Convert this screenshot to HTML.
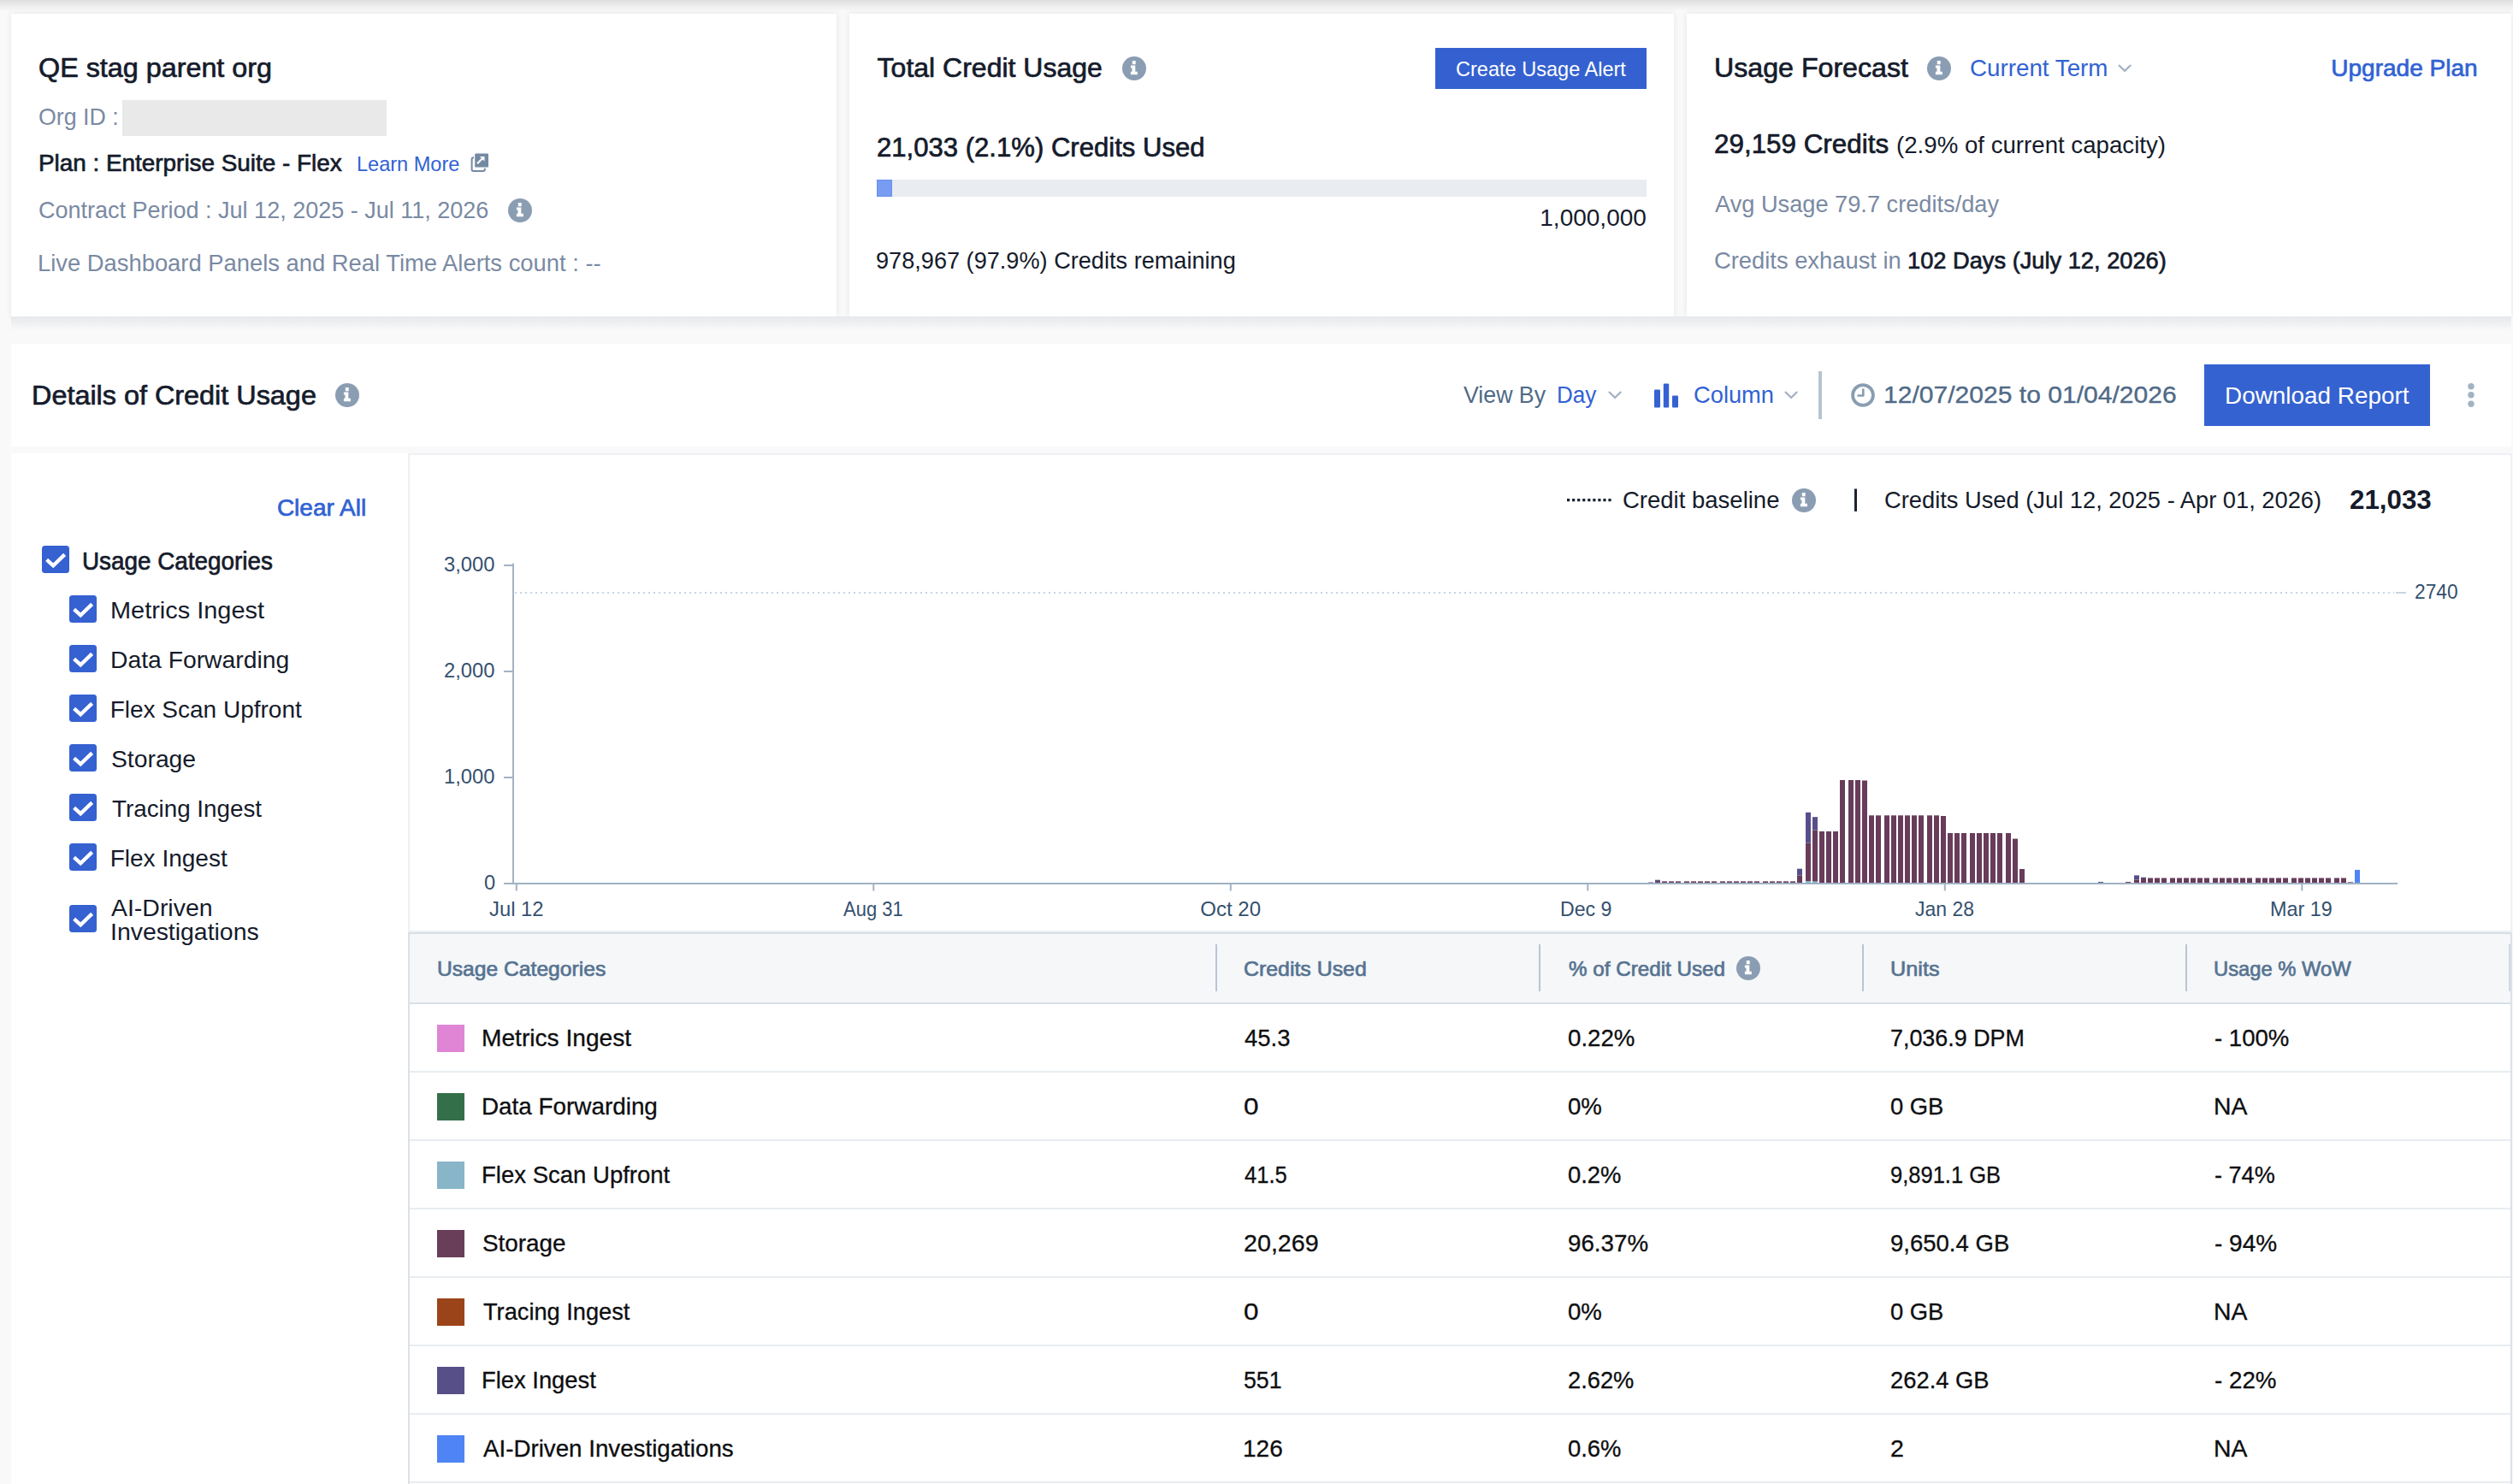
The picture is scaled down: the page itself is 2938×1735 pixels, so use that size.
<!DOCTYPE html>
<html><head><meta charset="utf-8"><title>Credit Usage</title><style>
html,body{margin:0;padding:0}
body{width:2938px;height:1735px;overflow:hidden;position:relative;background:#f9f9f9;font-family:"Liberation Sans",sans-serif}
.box{position:absolute}
.card{position:absolute;background:#fff}
.t{position:absolute;white-space:nowrap;transform-origin:0 0}
.ic{position:absolute;overflow:visible}
</style></head><body>
<div class="box" style="left:0;top:0;width:2938px;height:13px;background:linear-gradient(#dfdfdf,#f9f9f9)"></div>
<div class="card" style="left:13px;top:16px;width:965px;height:354px;box-shadow:0 0 7px rgba(40,60,90,0.1)"></div>
<div class="card" style="left:993px;top:16px;width:964px;height:354px;box-shadow:0 0 7px rgba(40,60,90,0.1)"></div>
<div class="card" style="left:1972px;top:16px;width:964px;height:354px;box-shadow:0 0 7px rgba(40,60,90,0.1)"></div>
<div class="box" style="left:13px;top:370px;width:2923px;height:16px;background:linear-gradient(#e6e8eb,#f9f9f9)"></div>
<div class="box" style="left:143px;top:116.7px;width:309px;height:42.6px;background:#e9e9e9"></div>
<div class="box" style="left:1025px;top:210px;width:900px;height:20px;background:#e9edf1"></div>
<div class="box" style="left:1025px;top:210px;width:18px;height:20px;background:#789cf2;box-shadow:inset 0 0 0 1px #6a90ee"></div>
<div class="box" style="left:1678px;top:56px;width:247px;height:48px;background:#3561d0"></div>
<div class="card" style="left:13px;top:402px;width:2923px;height:120px"></div>
<div class="box" style="left:2126px;top:434px;width:4px;height:56px;background:#b5c4d3"></div>
<div class="box" style="left:2577px;top:426px;width:264px;height:72px;background:#3562d1"></div>
<div class="card" style="left:13px;top:530px;width:2923px;height:1205px"></div>
<div class="box" style="left:477px;top:530px;width:2460px;height:560px;border:2px solid #eef1f4;border-bottom-color:#edf0f3;box-sizing:border-box;background:#fff"></div>
<div class="box" style="left:477px;top:1090px;width:2459px;height:645px;background:#fff;border-left:2px solid #dce1e9;box-sizing:border-box"></div>
<div class="box" style="left:477px;top:1090px;width:2459px;height:2px;background:#d8dee6"></div>
<div class="box" style="left:479px;top:1092px;width:2457px;height:80px;background:#f5f7f9"></div>
<div class="box" style="left:479px;top:1172px;width:2457px;height:2px;background:#d9dfe7"></div>
<div class="box" style="left:1421px;top:1104px;width:2px;height:55px;background:#b9c6d3"></div>
<div class="box" style="left:1799px;top:1104px;width:2px;height:55px;background:#b9c6d3"></div>
<div class="box" style="left:2177px;top:1104px;width:2px;height:55px;background:#b9c6d3"></div>
<div class="box" style="left:2555px;top:1104px;width:2px;height:55px;background:#b9c6d3"></div>
<div class="box" style="left:2933px;top:1104px;width:2px;height:55px;background:#d3d8de"></div>
<div class="box" style="left:479px;top:1252px;width:2457px;height:2px;background:#e8ecf0"></div>
<div class="box" style="left:479px;top:1332px;width:2457px;height:2px;background:#e8ecf0"></div>
<div class="box" style="left:479px;top:1412px;width:2457px;height:2px;background:#e8ecf0"></div>
<div class="box" style="left:479px;top:1492px;width:2457px;height:2px;background:#e8ecf0"></div>
<div class="box" style="left:479px;top:1572px;width:2457px;height:2px;background:#e8ecf0"></div>
<div class="box" style="left:479px;top:1652px;width:2457px;height:2px;background:#e8ecf0"></div>
<div class="box" style="left:479px;top:1732px;width:2457px;height:2px;background:#e8ecf0"></div>
<div class="box" style="left:511px;top:1198px;width:32px;height:32px;background:#e085d6"></div>
<div class="box" style="left:511px;top:1278px;width:32px;height:32px;background:#33704a"></div>
<div class="box" style="left:511px;top:1358px;width:32px;height:32px;background:#88b5c8"></div>
<div class="box" style="left:511px;top:1438px;width:32px;height:32px;background:#683e58"></div>
<div class="box" style="left:511px;top:1518px;width:32px;height:32px;background:#9c4419"></div>
<div class="box" style="left:511px;top:1598px;width:32px;height:32px;background:#574f88"></div>
<div class="box" style="left:511px;top:1678px;width:32px;height:32px;background:#4f84f4"></div>
<div class="box" style="left:2935px;top:1090px;width:2px;height:645px;background:#dce1e9"></div>
<svg class="ic" style="left:0;top:0" width="2938" height="1735" viewBox="0 0 2938 1735"><rect x="1927" y="1031.5" width="6" height="1.5" fill="#574f8a"/><rect x="1935" y="1030.1" width="6" height="2.9" fill="#683c5a"/><rect x="1935" y="1028.7" width="6" height="1.4" fill="#574f8a"/><rect x="1943" y="1030.4" width="6" height="2.6" fill="#683c5a"/><rect x="1951" y="1030.4" width="6" height="2.6" fill="#683c5a"/><rect x="1959" y="1030.4" width="6" height="2.6" fill="#683c5a"/><rect x="1969" y="1030.4" width="6" height="2.6" fill="#683c5a"/><rect x="1977" y="1030.4" width="6" height="2.6" fill="#683c5a"/><rect x="1985" y="1030.4" width="6" height="2.6" fill="#683c5a"/><rect x="1993" y="1030.4" width="6" height="2.6" fill="#683c5a"/><rect x="2001" y="1030.4" width="6" height="2.6" fill="#683c5a"/><rect x="2011" y="1030.4" width="6" height="2.6" fill="#683c5a"/><rect x="2019" y="1030.4" width="6" height="2.6" fill="#683c5a"/><rect x="2027" y="1030.4" width="6" height="2.6" fill="#683c5a"/><rect x="2035" y="1030.4" width="6" height="2.6" fill="#683c5a"/><rect x="2043" y="1030.4" width="6" height="2.6" fill="#683c5a"/><rect x="2051" y="1030.4" width="6" height="2.6" fill="#683c5a"/><rect x="2061" y="1030.4" width="6" height="2.6" fill="#683c5a"/><rect x="2069" y="1030.4" width="6" height="2.6" fill="#683c5a"/><rect x="2077" y="1030.4" width="6" height="2.6" fill="#683c5a"/><rect x="2085" y="1030.4" width="6" height="2.6" fill="#683c5a"/><rect x="2093" y="1030.4" width="6" height="2.6" fill="#683c5a"/><rect x="2101" y="1023.5" width="6" height="9.5" fill="#683c5a"/><rect x="2101" y="1015.7" width="6" height="7.8" fill="#574f8a"/><rect x="2111" y="1030.0" width="6" height="3.0" fill="#86b4c8"/><rect x="2111" y="985.5" width="6" height="44.5" fill="#683c5a"/><rect x="2111" y="949.8" width="6" height="35.7" fill="#574f8a"/><rect x="2119" y="1030.5" width="6" height="2.5" fill="#86b4c8"/><rect x="2119" y="970.5" width="6" height="60.0" fill="#683c5a"/><rect x="2119" y="955.2" width="6" height="15.3" fill="#574f8a"/><rect x="2127" y="972.0" width="6" height="61.0" fill="#683c5a"/><rect x="2135" y="972.0" width="6" height="61.0" fill="#683c5a"/><rect x="2143" y="972.0" width="6" height="61.0" fill="#683c5a"/><rect x="2151" y="912.0" width="6" height="121.0" fill="#683c5a"/><rect x="2161" y="912.0" width="6" height="121.0" fill="#683c5a"/><rect x="2169" y="912.0" width="6" height="121.0" fill="#683c5a"/><rect x="2177" y="912.5" width="6" height="120.5" fill="#683c5a"/><rect x="2185" y="953.3" width="6" height="79.7" fill="#683c5a"/><rect x="2193" y="953.3" width="6" height="79.7" fill="#683c5a"/><rect x="2203" y="953.3" width="6" height="79.7" fill="#683c5a"/><rect x="2211" y="953.3" width="6" height="79.7" fill="#683c5a"/><rect x="2219" y="953.3" width="6" height="79.7" fill="#683c5a"/><rect x="2227" y="953.3" width="6" height="79.7" fill="#683c5a"/><rect x="2235" y="953.3" width="6" height="79.7" fill="#683c5a"/><rect x="2243" y="953.3" width="6" height="79.7" fill="#683c5a"/><rect x="2253" y="953.3" width="6" height="79.7" fill="#683c5a"/><rect x="2261" y="953.3" width="6" height="79.7" fill="#683c5a"/><rect x="2269" y="954.0" width="6" height="79.0" fill="#683c5a"/><rect x="2277" y="974.0" width="6" height="59.0" fill="#683c5a"/><rect x="2285" y="974.0" width="6" height="59.0" fill="#683c5a"/><rect x="2293" y="974.0" width="6" height="59.0" fill="#683c5a"/><rect x="2303" y="974.0" width="6" height="59.0" fill="#683c5a"/><rect x="2311" y="974.0" width="6" height="59.0" fill="#683c5a"/><rect x="2319" y="974.0" width="6" height="59.0" fill="#683c5a"/><rect x="2327" y="974.0" width="6" height="59.0" fill="#683c5a"/><rect x="2335" y="974.0" width="6" height="59.0" fill="#683c5a"/><rect x="2345" y="974.0" width="6" height="59.0" fill="#683c5a"/><rect x="2353" y="980.6" width="6" height="52.4" fill="#683c5a"/><rect x="2361" y="1016.0" width="6" height="17.0" fill="#683c5a"/><rect x="2453" y="1031.0" width="6" height="2.0" fill="#574f8a"/><rect x="2485" y="1031.0" width="6" height="2.0" fill="#683c5a"/><rect x="2495" y="1028.4" width="6" height="4.6" fill="#683c5a"/><rect x="2495" y="1023.4" width="6" height="5.0" fill="#574f8a"/><rect x="2503" y="1027.0" width="6" height="6.0" fill="#683c5a"/><rect x="2503" y="1025.7" width="6" height="1.3" fill="#574f8a"/><rect x="2511" y="1026.5" width="6" height="6.5" fill="#683c5a"/><rect x="2519" y="1026.5" width="6" height="6.5" fill="#683c5a"/><rect x="2527" y="1026.5" width="6" height="6.5" fill="#683c5a"/><rect x="2537" y="1026.5" width="6" height="6.5" fill="#683c5a"/><rect x="2545" y="1026.5" width="6" height="6.5" fill="#683c5a"/><rect x="2553" y="1026.5" width="6" height="6.5" fill="#683c5a"/><rect x="2561" y="1026.5" width="6" height="6.5" fill="#683c5a"/><rect x="2569" y="1026.5" width="6" height="6.5" fill="#683c5a"/><rect x="2577" y="1026.5" width="6" height="6.5" fill="#683c5a"/><rect x="2587" y="1026.5" width="6" height="6.5" fill="#683c5a"/><rect x="2595" y="1026.5" width="6" height="6.5" fill="#683c5a"/><rect x="2603" y="1026.5" width="6" height="6.5" fill="#683c5a"/><rect x="2611" y="1026.5" width="6" height="6.5" fill="#683c5a"/><rect x="2619" y="1026.5" width="6" height="6.5" fill="#683c5a"/><rect x="2627" y="1026.5" width="6" height="6.5" fill="#683c5a"/><rect x="2637" y="1026.5" width="6" height="6.5" fill="#683c5a"/><rect x="2645" y="1026.5" width="6" height="6.5" fill="#683c5a"/><rect x="2653" y="1026.5" width="6" height="6.5" fill="#683c5a"/><rect x="2661" y="1026.5" width="6" height="6.5" fill="#683c5a"/><rect x="2669" y="1026.5" width="6" height="6.5" fill="#683c5a"/><rect x="2679" y="1026.5" width="6" height="6.5" fill="#683c5a"/><rect x="2687" y="1026.5" width="6" height="6.5" fill="#683c5a"/><rect x="2695" y="1026.5" width="6" height="6.5" fill="#683c5a"/><rect x="2703" y="1026.5" width="6" height="6.5" fill="#683c5a"/><rect x="2711" y="1026.5" width="6" height="6.5" fill="#683c5a"/><rect x="2719" y="1026.5" width="6" height="6.5" fill="#683c5a"/><rect x="2729" y="1026.5" width="6" height="6.5" fill="#683c5a"/><rect x="2737" y="1026.5" width="6" height="6.5" fill="#683c5a"/><rect x="2745" y="1031.3" width="6" height="1.7" fill="#683c5a"/><rect x="2753" y="1017.0" width="6" height="16.0" fill="#4f84f4"/><line x1="602" y1="693" x2="2799" y2="693" stroke="#c6d5e3" stroke-width="2" stroke-dasharray="2 4"/><line x1="2801" y1="693" x2="2813" y2="693" stroke="#c6d5e3" stroke-width="2"/><rect x="599" y="658.6" width="2" height="375.4" fill="#a2b3c4"/><rect x="600" y="1032" width="2203" height="2" fill="#9fb2c4"/><rect x="589" y="660" width="11" height="2" fill="#a2b3c4"/><rect x="589" y="784" width="11" height="2" fill="#a2b3c4"/><rect x="589" y="908" width="11" height="2" fill="#a2b3c4"/><rect x="589" y="1032" width="11" height="2" fill="#a2b3c4"/><rect x="602.8" y="1034" width="2" height="7.5" fill="#a2b3c4"/><rect x="1020.3" y="1034" width="2" height="7.5" fill="#a2b3c4"/><rect x="1437.8" y="1034" width="2" height="7.5" fill="#a2b3c4"/><rect x="1855.3" y="1034" width="2" height="7.5" fill="#a2b3c4"/><rect x="2272.8" y="1034" width="2" height="7.5" fill="#a2b3c4"/><rect x="2690.3" y="1034" width="2" height="7.5" fill="#a2b3c4"/><line x1="1832" y1="584.7" x2="1884" y2="584.7" stroke="#1b2333" stroke-width="3.2" stroke-dasharray="3.2 2.85"/><rect x="2168" y="571.5" width="3" height="26.4" fill="#1b2333"/></svg>
<svg class="ic" style="left:594.1px;top:231.9px" width="28" height="28" viewBox="0 0 28 28"><circle cx="14" cy="14" r="14" fill="#8b9db3"/><rect x="11.8" y="5" width="3.9" height="4.2" rx="0.5" fill="#fff"/><path d="M9.9 10.4H15.3V17.8H17.9V21.2H9.9V17.8H11.5V13.6H9.9Z" fill="#fff"/></svg>
<svg class="ic" style="left:1311.9px;top:65.9px" width="28" height="28" viewBox="0 0 28 28"><circle cx="14" cy="14" r="14" fill="#8b9db3"/><rect x="11.8" y="5" width="3.9" height="4.2" rx="0.5" fill="#fff"/><path d="M9.9 10.4H15.3V17.8H17.9V21.2H9.9V17.8H11.5V13.6H9.9Z" fill="#fff"/></svg>
<svg class="ic" style="left:2253.0px;top:66.0px" width="28" height="28" viewBox="0 0 28 28"><circle cx="14" cy="14" r="14" fill="#8b9db3"/><rect x="11.8" y="5" width="3.9" height="4.2" rx="0.5" fill="#fff"/><path d="M9.9 10.4H15.3V17.8H17.9V21.2H9.9V17.8H11.5V13.6H9.9Z" fill="#fff"/></svg>
<svg class="ic" style="left:392.0px;top:447.9px" width="28" height="28" viewBox="0 0 28 28"><circle cx="14" cy="14" r="14" fill="#8b9db3"/><rect x="11.8" y="5" width="3.9" height="4.2" rx="0.5" fill="#fff"/><path d="M9.9 10.4H15.3V17.8H17.9V21.2H9.9V17.8H11.5V13.6H9.9Z" fill="#fff"/></svg>
<svg class="ic" style="left:2095.0px;top:571.0px" width="28" height="28" viewBox="0 0 28 28"><circle cx="14" cy="14" r="14" fill="#8b9db3"/><rect x="11.8" y="5" width="3.9" height="4.2" rx="0.5" fill="#fff"/><path d="M9.9 10.4H15.3V17.8H17.9V21.2H9.9V17.8H11.5V13.6H9.9Z" fill="#fff"/></svg>
<svg class="ic" style="left:2029.9px;top:1117.9px" width="28" height="28" viewBox="0 0 28 28"><circle cx="14" cy="14" r="14" fill="#8b9db3"/><rect x="11.8" y="5" width="3.9" height="4.2" rx="0.5" fill="#fff"/><path d="M9.9 10.4H15.3V17.8H17.9V21.2H9.9V17.8H11.5V13.6H9.9Z" fill="#fff"/></svg>
<svg class="ic" style="left:2475.8px;top:75.1px" width="17" height="11" viewBox="0 0 17 11"><path d="M1.6 1.6L8.1 7.9L14.6 1.6" fill="none" stroke="#a6b4c4" stroke-width="2.2" stroke-linecap="round"/></svg>
<svg class="ic" style="left:1879.5px;top:456.8px" width="17" height="11" viewBox="0 0 17 11"><path d="M1.6 1.6L8.1 7.9L14.6 1.6" fill="none" stroke="#a6b4c4" stroke-width="2.2" stroke-linecap="round"/></svg>
<svg class="ic" style="left:2085.7px;top:456.8px" width="17" height="11" viewBox="0 0 17 11"><path d="M1.6 1.6L8.1 7.9L14.6 1.6" fill="none" stroke="#a6b4c4" stroke-width="2.2" stroke-linecap="round"/></svg>
<svg class="ic" style="left:550px;top:178.5px" width="22" height="22" viewBox="0 0 22 22"><rect x="1.6" y="5.3" width="15.2" height="15.6" rx="2" fill="none" stroke="#7489a2" stroke-width="2"/><rect x="4.6" y="-0.2" width="17" height="17.4" rx="1.8" fill="#7489a2" stroke="#fff" stroke-width="1.2"/><path d="M8 12.3L14.6 5.7" stroke="#fff" stroke-width="2.2"/><path d="M10.9 3.9H16.5V9.5Z" fill="#fff"/></svg>
<svg class="ic" style="left:1934px;top:447.5px" width="29" height="29" viewBox="0 0 29 29"><rect x="0" y="7.5" width="7" height="21" rx="1" fill="#3561d1"/><rect x="10.8" y="0.4" width="6.4" height="28.1" rx="1" fill="#3561d1"/><rect x="21" y="14.4" width="7" height="14.1" rx="1" fill="#3561d1"/></svg>
<svg class="ic" style="left:2164px;top:448px" width="28" height="28" viewBox="0 0 28 28"><circle cx="14" cy="14" r="11.95" fill="none" stroke="#8a9db1" stroke-width="3.8"/><path d="M14.3 7.6V14.5H8.6" fill="none" stroke="#8a9db1" stroke-width="2.7" stroke-linecap="round" stroke-linejoin="round"/></svg>
<svg class="ic" style="left:2884px;top:447px" width="10" height="30" viewBox="0 0 10 30"><circle cx="5" cy="4.7" r="3.7" fill="#a3b2c4"/><circle cx="5" cy="14.8" r="3.7" fill="#a3b2c4"/><circle cx="5" cy="25.3" r="3.7" fill="#a3b2c4"/></svg>
<svg class="ic" style="left:49px;top:638px" width="32" height="32" viewBox="0 0 32 32"><rect width="32" height="32" rx="3.5" fill="#3561d1"/><path d="M5.6 16.4L13.2 23.2L26.6 10.4" fill="none" stroke="#fff" stroke-width="4.3"/></svg>
<svg class="ic" style="left:81px;top:696.3px" width="32" height="32" viewBox="0 0 32 32"><rect width="32" height="32" rx="3.5" fill="#3561d1"/><path d="M5.6 16.4L13.2 23.2L26.6 10.4" fill="none" stroke="#fff" stroke-width="4.3"/></svg>
<svg class="ic" style="left:81px;top:754.3px" width="32" height="32" viewBox="0 0 32 32"><rect width="32" height="32" rx="3.5" fill="#3561d1"/><path d="M5.6 16.4L13.2 23.2L26.6 10.4" fill="none" stroke="#fff" stroke-width="4.3"/></svg>
<svg class="ic" style="left:81px;top:812.3px" width="32" height="32" viewBox="0 0 32 32"><rect width="32" height="32" rx="3.5" fill="#3561d1"/><path d="M5.6 16.4L13.2 23.2L26.6 10.4" fill="none" stroke="#fff" stroke-width="4.3"/></svg>
<svg class="ic" style="left:81px;top:870.3px" width="32" height="32" viewBox="0 0 32 32"><rect width="32" height="32" rx="3.5" fill="#3561d1"/><path d="M5.6 16.4L13.2 23.2L26.6 10.4" fill="none" stroke="#fff" stroke-width="4.3"/></svg>
<svg class="ic" style="left:81px;top:928.3px" width="32" height="32" viewBox="0 0 32 32"><rect width="32" height="32" rx="3.5" fill="#3561d1"/><path d="M5.6 16.4L13.2 23.2L26.6 10.4" fill="none" stroke="#fff" stroke-width="4.3"/></svg>
<svg class="ic" style="left:81px;top:986.3px" width="32" height="32" viewBox="0 0 32 32"><rect width="32" height="32" rx="3.5" fill="#3561d1"/><path d="M5.6 16.4L13.2 23.2L26.6 10.4" fill="none" stroke="#fff" stroke-width="4.3"/></svg>
<svg class="ic" style="left:81px;top:1058px" width="32" height="32" viewBox="0 0 32 32"><rect width="32" height="32" rx="3.5" fill="#3561d1"/><path d="M5.6 16.4L13.2 23.2L26.6 10.4" fill="none" stroke="#fff" stroke-width="4.3"/></svg>
<span class="t" style="left:44.79px;top:63.00px;font-size:32px;line-height:32px;color:#151b2b;-webkit-text-stroke:0.7px #151b2b;transform:scaleX(1.0097);">QE stag parent org</span>
<span class="t" style="left:44.95px;top:123.00px;font-size:28px;line-height:28px;color:#7a8aa3;transform:scaleX(0.9547);">Org ID :</span>
<span class="t" style="left:44.71px;top:177.00px;font-size:28px;line-height:28px;color:#151b2b;-webkit-text-stroke:0.7px #151b2b;transform:scaleX(0.9952);">Plan : Enterprise Suite - Flex</span>
<span class="t" style="left:416.84px;top:180.20px;font-size:24px;line-height:24px;color:#3162d4;transform:scaleX(0.9808);">Learn More</span>
<span class="t" style="left:44.54px;top:232.00px;font-size:28px;line-height:28px;color:#7a8aa3;transform:scaleX(0.9643);">Contract Period : Jul 12, 2025 - Jul 11, 2026</span>
<span class="t" style="left:43.55px;top:294.20px;font-size:28px;line-height:28px;color:#7a8aa3;transform:scaleX(0.9773);">Live Dashboard Panels and Real Time Alerts count : --</span>
<span class="t" style="left:1025.60px;top:63.00px;font-size:32px;line-height:32px;color:#151b2b;-webkit-text-stroke:0.7px #151b2b;">Total Credit Usage</span>
<span class="t" style="left:1701.92px;top:69.00px;font-size:24px;line-height:24px;color:#ffffff;transform:scaleX(0.9807);">Create Usage Alert</span>
<span class="t" style="left:1025.03px;top:156.20px;font-size:32px;line-height:32px;color:#151b2b;-webkit-text-stroke:0.7px #151b2b;transform:scaleX(0.9715);">21,033 (2.1%) Credits Used</span>
<span class="t" style="left:1800.30px;top:241.00px;font-size:28px;line-height:28px;color:#151b2b;">1,000,000</span>
<span class="t" style="left:1024.03px;top:290.60px;font-size:28px;line-height:28px;color:#151b2b;transform:scaleX(0.9690);">978,967 (97.9%) Credits remaining</span>
<span class="t" style="left:2003.59px;top:63.10px;font-size:32px;line-height:32px;color:#151b2b;-webkit-text-stroke:0.7px #151b2b;transform:scaleX(1.0049);">Usage Forecast</span>
<span class="t" style="left:2303.01px;top:65.90px;font-size:28px;line-height:28px;color:#3162d4;transform:scaleX(0.9912);">Current Term</span>
<span class="t" style="left:2725.30px;top:65.80px;font-size:28px;line-height:28px;color:#3162d4;-webkit-text-stroke:0.7px #3162d4;">Upgrade Plan</span>
<span class="t" style="left:2004.02px;top:152.30px;font-size:32px;line-height:32px;color:#151b2b;-webkit-text-stroke:0.7px #151b2b;transform:scaleX(0.9807);">29,159 Credits</span>
<span class="t" style="left:2217.41px;top:156.20px;font-size:28px;line-height:28px;color:#151b2b;transform:scaleX(0.9874);">(2.9% of current capacity)</span>
<span class="t" style="left:2004.80px;top:225.20px;font-size:28px;line-height:28px;color:#7a8aa3;transform:scaleX(0.9713);">Avg Usage 79.7 credits/day</span>
<span class="t" style="left:2004.12px;top:291.30px;font-size:28px;line-height:28px;color:#7a8aa3;transform:scaleX(0.9761);">Credits exhaust in</span>
<span class="t" style="left:2229.83px;top:291.00px;font-size:28px;line-height:28px;color:#151b2b;-webkit-text-stroke:0.7px #151b2b;transform:scaleX(0.9728);">102 Days (July 12, 2026)</span>
<span class="t" style="left:36.68px;top:446.20px;font-size:32px;line-height:32px;color:#151b2b;-webkit-text-stroke:0.7px #151b2b;transform:scaleX(1.0117);">Details of Credit Usage</span>
<span class="t" style="left:1710.60px;top:448.00px;font-size:28px;line-height:28px;color:#4f6a87;transform:scaleX(0.9545);">View By</span>
<span class="t" style="left:1820.14px;top:448.00px;font-size:28px;line-height:28px;color:#3162d4;transform:scaleX(0.9313);">Day</span>
<span class="t" style="left:1979.63px;top:448.20px;font-size:28px;line-height:28px;color:#3162d4;transform:scaleX(0.9745);">Column</span>
<span class="t" style="left:2202.15px;top:448.00px;font-size:28px;line-height:28px;color:#4f6a87;-webkit-text-stroke:0.35px #4f6a87;transform:scaleX(1.0737);">12/07/2025 to 01/04/2026</span>
<span class="t" style="left:2600.81px;top:449.30px;font-size:28px;line-height:28px;color:#ffffff;transform:scaleX(0.9958);">Download Report</span>
<span class="t" style="left:323.90px;top:580.10px;font-size:28px;line-height:28px;color:#3162d4;-webkit-text-stroke:0.7px #3162d4;">Clear All</span>
<span class="t" style="left:96.48px;top:641.50px;font-size:29px;line-height:29px;color:#151b2b;-webkit-text-stroke:0.7px #151b2b;transform:scaleX(0.9604);">Usage Categories</span>
<span class="t" style="left:128.63px;top:700.00px;font-size:28px;line-height:28px;color:#151b2b;transform:scaleX(1.0326);">Metrics Ingest</span>
<span class="t" style="left:128.68px;top:758.00px;font-size:28px;line-height:28px;color:#151b2b;transform:scaleX(1.0108);">Data Forwarding</span>
<span class="t" style="left:128.70px;top:816.00px;font-size:28px;line-height:28px;color:#151b2b;">Flex Scan Upfront</span>
<span class="t" style="left:129.69px;top:874.00px;font-size:28px;line-height:28px;color:#151b2b;transform:scaleX(1.0104);">Storage</span>
<span class="t" style="left:130.70px;top:932.00px;font-size:28px;line-height:28px;color:#151b2b;transform:scaleX(0.9926);">Tracing Ingest</span>
<span class="t" style="left:128.71px;top:990.00px;font-size:28px;line-height:28px;color:#151b2b;">Flex Ingest</span>
<span class="t" style="left:130.20px;top:1047.90px;font-size:28px;line-height:28px;color:#151b2b;transform:scaleX(1.0157);">AI-Driven</span>
<span class="t" style="left:128.97px;top:1075.70px;font-size:28px;line-height:28px;color:#151b2b;transform:scaleX(1.0142);">Investigations</span>
<span class="t" style="left:1897.02px;top:571.20px;font-size:28px;line-height:28px;color:#151b2b;transform:scaleX(0.9822);">Credit baseline</span>
<span class="t" style="left:2203.33px;top:571.20px;font-size:28px;line-height:28px;color:#151b2b;transform:scaleX(0.9745);">Credits Used (Jul 12, 2025 - Apr 01, 2026)</span>
<span class="t" style="left:2746.82px;top:568.00px;font-size:32px;line-height:32px;color:#151b2b;font-weight:bold;transform:scaleX(0.9781);">21,033</span>
<span class="t" style="left:519.31px;top:647.80px;font-size:24px;line-height:24px;color:#34506e;transform:scaleX(0.9881);">3,000</span>
<span class="t" style="left:519.31px;top:771.80px;font-size:24px;line-height:24px;color:#34506e;transform:scaleX(0.9881);">2,000</span>
<span class="t" style="left:519.22px;top:895.80px;font-size:24px;line-height:24px;color:#34506e;transform:scaleX(0.9897);">1,000</span>
<span class="t" style="left:565.82px;top:1019.80px;font-size:24px;line-height:24px;color:#34506e;transform:scaleX(0.9833);">0</span>
<span class="t" style="left:2822.75px;top:679.80px;font-size:24px;line-height:24px;color:#34506e;transform:scaleX(0.9462);">2740</span>
<span class="t" style="left:571.50px;top:1051.00px;font-size:24px;line-height:24px;color:#34506e;transform:scaleX(0.9921);">Jul 12</span>
<span class="t" style="left:985.80px;top:1051.00px;font-size:24px;line-height:24px;color:#34506e;transform:scaleX(0.9160);">Aug 31</span>
<span class="t" style="left:1403.30px;top:1051.00px;font-size:24px;line-height:24px;color:#34506e;">Oct 20</span>
<span class="t" style="left:1824.17px;top:1050.90px;font-size:24px;line-height:24px;color:#34506e;transform:scaleX(0.9633);">Dec 9</span>
<span class="t" style="left:2239.30px;top:1050.70px;font-size:24px;line-height:24px;color:#34506e;transform:scaleX(0.9563);">Jan 28</span>
<span class="t" style="left:2653.65px;top:1050.70px;font-size:24px;line-height:24px;color:#34506e;transform:scaleX(0.9736);">Mar 19</span>
<span class="t" style="left:510.77px;top:1121.20px;font-size:24px;line-height:24px;color:#577391;-webkit-text-stroke:0.7px #577391;transform:scaleX(1.0267);">Usage Categories</span>
<span class="t" style="left:1453.96px;top:1121.20px;font-size:24px;line-height:24px;color:#577391;-webkit-text-stroke:0.7px #577391;transform:scaleX(1.0365);">Credits Used</span>
<span class="t" style="left:1834.40px;top:1121.20px;font-size:24px;line-height:24px;color:#577391;-webkit-text-stroke:0.7px #577391;transform:scaleX(1.0088);">% of Credit Used</span>
<span class="t" style="left:2209.95px;top:1121.20px;font-size:24px;line-height:24px;color:#577391;-webkit-text-stroke:0.7px #577391;transform:scaleX(1.0519);">Units</span>
<span class="t" style="left:2588.01px;top:1121.20px;font-size:24px;line-height:24px;color:#577391;-webkit-text-stroke:0.7px #577391;transform:scaleX(0.9907);">Usage % WoW</span>
<span class="t" style="left:562.59px;top:1200.00px;font-size:28px;line-height:28px;color:#0d0e10;-webkit-text-stroke:0.3px #0d0e10;transform:scaleX(1.0046);">Metrics Ingest</span>
<span class="t" style="left:1455.00px;top:1200.00px;font-size:28px;line-height:28px;color:#0d0e10;-webkit-text-stroke:0.3px #0d0e10;transform:scaleX(0.9796);">45.3</span>
<span class="t" style="left:1832.61px;top:1200.00px;font-size:28px;line-height:28px;color:#0d0e10;-webkit-text-stroke:0.3px #0d0e10;transform:scaleX(0.9885);">0.22%</span>
<span class="t" style="left:2210.44px;top:1200.00px;font-size:28px;line-height:28px;color:#0d0e10;-webkit-text-stroke:0.3px #0d0e10;transform:scaleX(0.9602);">7,036.9 DPM</span>
<span class="t" style="left:2589.01px;top:1200.00px;font-size:28px;line-height:28px;color:#0d0e10;-webkit-text-stroke:0.3px #0d0e10;transform:scaleX(0.9851);">- 100%</span>
<span class="t" style="left:562.61px;top:1280.00px;font-size:28px;line-height:28px;color:#0d0e10;-webkit-text-stroke:0.3px #0d0e10;transform:scaleX(0.9946);">Data Forwarding</span>
<span class="t" style="left:1453.88px;top:1280.00px;font-size:28px;line-height:28px;color:#0d0e10;-webkit-text-stroke:0.3px #0d0e10;transform:scaleX(1.1214);">0</span>
<span class="t" style="left:1832.62px;top:1280.00px;font-size:28px;line-height:28px;color:#0d0e10;-webkit-text-stroke:0.3px #0d0e10;transform:scaleX(0.9846);">0%</span>
<span class="t" style="left:2210.42px;top:1280.00px;font-size:28px;line-height:28px;color:#0d0e10;-webkit-text-stroke:0.3px #0d0e10;transform:scaleX(0.9774);">0 GB</span>
<span class="t" style="left:2587.97px;top:1280.00px;font-size:28px;line-height:28px;color:#0d0e10;-webkit-text-stroke:0.3px #0d0e10;transform:scaleX(1.0135);">NA</span>
<span class="t" style="left:562.63px;top:1360.00px;font-size:28px;line-height:28px;color:#0d0e10;-webkit-text-stroke:0.3px #0d0e10;transform:scaleX(0.9829);">Flex Scan Upfront</span>
<span class="t" style="left:1455.00px;top:1360.00px;font-size:28px;line-height:28px;color:#0d0e10;-webkit-text-stroke:0.3px #0d0e10;transform:scaleX(0.9130);">41.5</span>
<span class="t" style="left:1832.62px;top:1360.00px;font-size:28px;line-height:28px;color:#0d0e10;-webkit-text-stroke:0.3px #0d0e10;transform:scaleX(0.9790);">0.2%</span>
<span class="t" style="left:2210.49px;top:1360.00px;font-size:28px;line-height:28px;color:#0d0e10;-webkit-text-stroke:0.3px #0d0e10;transform:scaleX(0.9114);">9,891.1 GB</span>
<span class="t" style="left:2589.03px;top:1360.00px;font-size:28px;line-height:28px;color:#0d0e10;-webkit-text-stroke:0.3px #0d0e10;transform:scaleX(0.9667);">- 74%</span>
<span class="t" style="left:563.61px;top:1440.00px;font-size:28px;line-height:28px;color:#0d0e10;-webkit-text-stroke:0.3px #0d0e10;transform:scaleX(0.9948);">Storage</span>
<span class="t" style="left:1453.98px;top:1440.00px;font-size:28px;line-height:28px;color:#0d0e10;-webkit-text-stroke:0.3px #0d0e10;transform:scaleX(1.0238);">20,269</span>
<span class="t" style="left:1832.61px;top:1440.00px;font-size:28px;line-height:28px;color:#0d0e10;-webkit-text-stroke:0.3px #0d0e10;transform:scaleX(0.9903);">96.37%</span>
<span class="t" style="left:2210.42px;top:1440.00px;font-size:28px;line-height:28px;color:#0d0e10;-webkit-text-stroke:0.3px #0d0e10;transform:scaleX(0.9829);">9,650.4 GB</span>
<span class="t" style="left:2589.00px;top:1440.00px;font-size:28px;line-height:28px;color:#0d0e10;-webkit-text-stroke:0.3px #0d0e10;">- 94%</span>
<span class="t" style="left:564.60px;top:1520.00px;font-size:28px;line-height:28px;color:#0d0e10;-webkit-text-stroke:0.3px #0d0e10;transform:scaleX(0.9712);">Tracing Ingest</span>
<span class="t" style="left:1453.88px;top:1520.00px;font-size:28px;line-height:28px;color:#0d0e10;-webkit-text-stroke:0.3px #0d0e10;transform:scaleX(1.1214);">0</span>
<span class="t" style="left:1832.62px;top:1520.00px;font-size:28px;line-height:28px;color:#0d0e10;-webkit-text-stroke:0.3px #0d0e10;transform:scaleX(0.9846);">0%</span>
<span class="t" style="left:2210.42px;top:1520.00px;font-size:28px;line-height:28px;color:#0d0e10;-webkit-text-stroke:0.3px #0d0e10;transform:scaleX(0.9774);">0 GB</span>
<span class="t" style="left:2587.97px;top:1520.00px;font-size:28px;line-height:28px;color:#0d0e10;-webkit-text-stroke:0.3px #0d0e10;transform:scaleX(1.0135);">NA</span>
<span class="t" style="left:562.65px;top:1600.00px;font-size:28px;line-height:28px;color:#0d0e10;-webkit-text-stroke:0.3px #0d0e10;transform:scaleX(0.9770);">Flex Ingest</span>
<span class="t" style="left:1454.05px;top:1600.00px;font-size:28px;line-height:28px;color:#0d0e10;-webkit-text-stroke:0.3px #0d0e10;transform:scaleX(0.9533);">551</span>
<span class="t" style="left:1832.63px;top:1600.00px;font-size:28px;line-height:28px;color:#0d0e10;-webkit-text-stroke:0.3px #0d0e10;transform:scaleX(0.9744);">2.62%</span>
<span class="t" style="left:2210.42px;top:1600.00px;font-size:28px;line-height:28px;color:#0d0e10;-webkit-text-stroke:0.3px #0d0e10;transform:scaleX(0.9769);">262.4 GB</span>
<span class="t" style="left:2589.01px;top:1600.00px;font-size:28px;line-height:28px;color:#0d0e10;-webkit-text-stroke:0.3px #0d0e10;transform:scaleX(0.9917);">- 22%</span>
<span class="t" style="left:564.60px;top:1680.00px;font-size:28px;line-height:28px;color:#0d0e10;-webkit-text-stroke:0.3px #0d0e10;transform:scaleX(0.9898);">AI-Driven Investigations</span>
<span class="t" style="left:1453.00px;top:1680.00px;font-size:28px;line-height:28px;color:#0d0e10;-webkit-text-stroke:0.3px #0d0e10;">126</span>
<span class="t" style="left:1832.62px;top:1680.00px;font-size:28px;line-height:28px;color:#0d0e10;-webkit-text-stroke:0.3px #0d0e10;transform:scaleX(0.9790);">0.6%</span>
<span class="t" style="left:2210.38px;top:1680.00px;font-size:28px;line-height:28px;color:#0d0e10;-webkit-text-stroke:0.3px #0d0e10;transform:scaleX(1.0214);">2</span>
<span class="t" style="left:2587.97px;top:1680.00px;font-size:28px;line-height:28px;color:#0d0e10;-webkit-text-stroke:0.3px #0d0e10;transform:scaleX(1.0135);">NA</span>
</body></html>
